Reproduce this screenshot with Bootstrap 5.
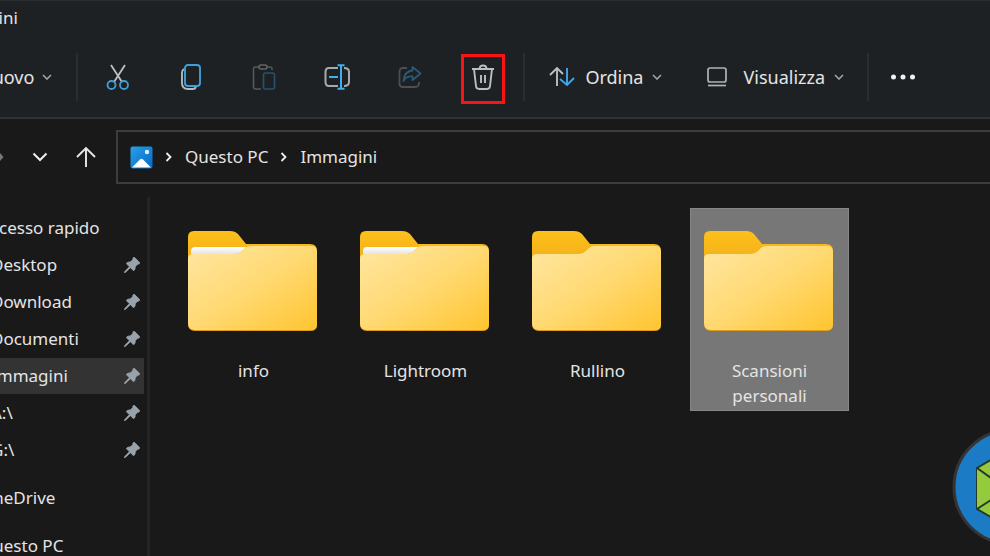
<!DOCTYPE html>
<html lang="it" data-bs-theme="dark">
<head>
<meta charset="utf-8">
<meta name="viewport" content="width=device-width, initial-scale=1">
<title>Immagini</title>
<link href="https://cdn.jsdelivr.net/npm/bootstrap@5.3.0/dist/css/bootstrap.min.css" rel="stylesheet">
<style>
  body { background: #191919; color: #e4e4e4; font: 17px/24px "Noto Sans", "Liberation Sans", sans-serif; }
  svg { display: block; flex: none; }
  .explorer { min-height: 100vh; }
  .top-area { background: #1e2124; border-top: 1px solid #2b2e30; border-bottom: 2px solid #303233; }
  .title-row { height: 36px; margin-left: -59px; padding-bottom: 2px; }
  .tools { height: 80px; margin-left: -21px; }
  .tools .btn, .address .btn { color: inherit; font-size: 18px; line-height: 24px; border: 0; padding: 0; border-radius: 0; }
  .tool-icon { width: 44px; height: 50px; display: flex; align-items: center; justify-content: center; }
  .tools .marked { border: 3px solid #fb1414; margin-top: 4px; height: 50px; }
  .icon-set { gap: 29px; margin-left: 18px; margin-right: 18px; align-items: center; }
  .icon-set .tool-icon { flex: none; }
  .view-btn { margin-left: 44px; }
  .tools .order-icon { margin-left: 24px; }
  .tools .end-gap { margin-left: 22px; }
  .rule { width: 2px; height: 48px; background: #2b2e30; }
  .address { padding-top: 11px; height: 65px; }
  .path-box { height: 54px; border: 2px solid #3d3d3d; border-right: 0; padding-left: 12px; }
  .path-box a, .side a { color: inherit; text-decoration: none; }
  .path-box .sep { margin: 0 13px 0 12px; }
  .side { width: 150px; border-right: 3px solid #242424; margin-top: 13px; padding: 13px 3px 0 0; }
  .side a { height: 36px; margin-bottom: 1px; padding-left: 11px; white-space: nowrap; }
  .side ul { margin-left: -20px; }
  .side .group-link { padding-left: 0; }
  .side .spaced { margin-top: 12px; }
  .side .picked { background: #333; }
  .side-scroll { overflow: hidden; flex: 1 1 0; }
  .side svg { margin-left: auto; margin-right: 4px; }
  .files { gap: 13px; padding: 24px; }
  .tile { width: 159px; border: 0; background: none; color: inherit; padding: 22px 14px 3px; line-height: 25px; }
  .tile svg { margin-bottom: 26px; }
  .tile.chosen { background: #777; outline: 1px solid #868686; outline-offset: -1px; }
  .badge-logo { position: absolute; right: -80px; bottom: 10px; }
</style>
<script src="https://cdn.jsdelivr.net/npm/bootstrap@5.3.0/dist/js/bootstrap.bundle.min.js"></script>
</head>
<body class="overflow-hidden">
<svg width="0" height="0" class="position-absolute" aria-hidden="true">
  <defs>
    <linearGradient id="front" x1="0" y1="0" x2="1" y2="1"><stop offset="0" stop-color="#ffe7a2"/><stop offset=".5" stop-color="#ffd972"/><stop offset="1" stop-color="#ffc52f"/></linearGradient>
    <linearGradient id="back" x1="0" y1="0" x2="0" y2="1"><stop offset="0" stop-color="#fdc01b"/><stop offset=".3" stop-color="#f3b01a"/><stop offset="1" stop-color="#dd9a1c"/></linearGradient>
    <linearGradient id="paper" x1="0" y1="0" x2="0" y2="1"><stop offset="0" stop-color="#fff"/><stop offset="1" stop-color="#d8dce2"/></linearGradient>
    <linearGradient id="sky" x1="0" y1="0" x2="1" y2="1"><stop offset="0" stop-color="#2aa0e6"/><stop offset="1" stop-color="#0568c4"/></linearGradient>
    <symbol id="folder" viewBox="0 0 129 102">
      <path d="M0 7Q0 1 6 1H42Q47 1 50 4L58 14H122Q129 14 129 21V95Q129 101 122 101H7Q0 101 0 94Z" fill="url(#back)"/>
      <path d="M0 29Q0 24 5 24H47Q51 24 54 21L57 18Q59 16 63 16H123Q129 16 129 22V94Q129 100 123 100H7Q0 100 0 93Z" fill="url(#front)"/>
    </symbol>
    <symbol id="folder-full" viewBox="0 0 129 102">
      <use href="#folder"/>
      <path d="M3 26V21Q3 17 7 17H58L54 21Q51 24 47 24H5Q3 24 3 26Z" fill="url(#paper)"/>
    </symbol>
    <symbol id="pin" viewBox="0 0 16 16"><path d="M9.4.5Q10 0 10.700 .6L15.400 5.300Q16 6 15.300 6.700Q14.500 7.300 13.600 7.200L11.200 9.800Q11.500 12 10.200 13.300Q9.600 13.800 9 13.200L6.400 10.700L1.600 15.200L.3 15.700L.8 14.400L5.400 9.700L2.800 7.100Q2.200 6.500 2.800 5.900Q4.200 4.700 6.300 5L8.800 2.500Q8.700 1.200 9.400 .5Z" fill="#98a2ab" stroke="#98a2ab" stroke-width=".8"/></symbol>
    <symbol id="down" viewBox="0 0 10 6"><path d="M1 1l4 4 4-4" fill="none" stroke="#a5a7a8" stroke-width="1.500"/></symbol>
    <symbol id="next" viewBox="0 0 7 10"><path d="M1.500 1l4 4-4 4" fill="none" stroke="#eee" stroke-width="1.800"/></symbol>
  </defs>
</svg>
<div class="explorer d-flex flex-column position-relative overflow-hidden">
  <header class="top-area">
    <div class="title-row d-flex align-items-center">Immagini</div>
    <div class="tools d-flex align-items-center" role="toolbar" aria-label="Comandi">
      <button class="btn d-flex align-items-center" type="button">Nuovo<svg class="ms-2" width="10" height="6"><use href="#down"/></svg></button>
      <div class="rule ms-4"></div>
      <div class="icon-set d-flex">
        <button class="btn tool-icon" type="button" aria-label="Taglia"><svg width="24" height="28" viewBox="0 0 24 28" fill="none" stroke-width="1.800"><path d="M5 2L16 19M19 2L8 19" stroke="#bfc2c4"/><circle cx="5.500" cy="22" r="4" stroke="#3f9fd6"/><circle cx="18" cy="22" r="4" stroke="#3f9fd6"/></svg></button>
        <button class="btn tool-icon" type="button" aria-label="Copia"><svg width="22" height="28" viewBox="0 0 22 28" fill="none" stroke-width="1.900"><path d="M4 6Q2 7 2 10V20Q2 26 8 26H13Q15 26 16 24" stroke="#b5b8ba"/><rect x="5" y="2" width="15" height="21" rx="3" stroke="#3f9fd6"/></svg></button>
        <button class="btn tool-icon" type="button" aria-label="Incolla"><svg width="24" height="28" viewBox="0 0 24 28" fill="none" stroke-width="1.600"><path d="M7 4H3Q1.500 4 1.500 6V24Q1.500 26 4 26H9M15 4H18Q20 4 20 6V7" stroke="#54585a"/><rect x="7" y="2" width="8" height="4" rx="2" stroke="#606466"/><rect x="11.500" y="10" width="11" height="16" rx="2" stroke="#285269"/></svg></button>
        <button class="btn tool-icon" type="button" aria-label="Rinomina"><svg width="26" height="26" viewBox="0 0 26 26" fill="none" stroke-width="2"><path d="M14 4H5Q1.500 4 1.500 8V18Q1.500 22 5 22H14M20 4Q25 4 25 8V18Q25 22 20 22" stroke="#a7aaac"/><path d="M17 1.500V24.500M13.500 1.200H20.500M13.500 24.800H20.500M5 13H14" stroke="#3fb0ee"/></svg></button>
        <button class="btn tool-icon" type="button" aria-label="Condividi"><svg width="24" height="24" viewBox="0 0 24 24" fill="none" stroke-width="1.800"><path d="M9 3H5Q1.500 3 1.500 7V19Q1.500 22 5 22H17Q21 22 21 18V17" stroke="#4b5052"/><path d="M14.500 2L22.500 8.500L14.500 15V11.500Q8 11 5.500 16Q6 6.500 14.500 5.500Z" stroke="#2b5b74" stroke-linejoin="round"/></svg></button>
        <button class="btn tool-icon marked" type="button" aria-label="Elimina"><svg class="mb-1" width="24" height="28" viewBox="0 0 24 28" fill="none" stroke="#bcbfc1" stroke-width="1.900"><path d="M1 6H23M8.500 6Q8.500 2.500 12 2.500Q15.500 2.500 15.500 6M3 6L5 23Q5.300 26 8 26H16Q18.700 26 19 23L21 6M10 12V20M14 12V20"/></svg></button>
      </div>
      <div class="rule"></div>
      <button class="btn order-icon d-flex align-items-center" type="button"><svg class="me-2" width="28" height="22" viewBox="0 0 28 22" fill="none" stroke-width="1.900"><path d="M8 20V3M1 9L8 2L14 8" stroke="#bcbfc1"/><path d="M18 2V19M11 13L18 19L25 12" stroke="#3fa9e8"/></svg>Ordina<svg class="ms-2" width="12" height="6"><use href="#down"/></svg></button>
      <button class="btn view-btn d-flex align-items-center" type="button"><svg class="me-3" width="20" height="22" viewBox="0 0 20 22" fill="none" stroke="#b0b3b5" stroke-width="1.700"><rect x="1" y="2" width="18" height="14" rx="2"/><path d="M1 19.500H19"/></svg>Visualizza<svg class="ms-2" width="12" height="6"><use href="#down"/></svg></button>
      <div class="rule end-gap"></div>
      <button class="btn end-gap" type="button" aria-label="Altro"><svg width="26" height="6" viewBox="0 0 26 6" fill="#f2f2f2"><circle cx="2.500" cy="3" r="2.500"/><circle cx="12" cy="3" r="2.500"/><circle cx="21.500" cy="3" r="2.500"/></svg></button>
    </div>
  </header>
  <div class="address d-flex align-items-center">
    <button class="btn" type="button" aria-label="Avanti"><svg width="4" height="8" viewBox="0 0 4 8"><path d="M0 0L3.500 4L0 8Z" fill="#777"/></svg></button>
    <button class="btn ms-4 ps-1" type="button" aria-label="Recenti"><svg width="16" height="10" viewBox="0 0 16 10" fill="none" stroke="#eee" stroke-width="2"><path d="M1.500 1.500L8 8L14.500 1.500"/></svg></button>
    <button class="btn ms-4 me-3" type="button" aria-label="Su"><svg class="ms-1 me-1" width="20" height="22" viewBox="0 0 20 22" fill="none" stroke="#e8e8e8" stroke-width="1.900"><path d="M10 21V2M1 11L10 2L19 11"/></svg></button>
    <nav class="path-box d-flex align-items-center flex-grow-1" aria-label="Percorso">
      <svg width="23" height="23" viewBox="0 0 23 23"><rect x=".5" y=".5" width="22" height="22" rx="2" fill="url(#sky)"/><circle cx="17" cy="6" r="2.200" fill="#d5efff"/><path d="M2 21.500L10 13.500Q11.500 12 13 13.500L21 21.500Z" fill="#fff"/></svg>
      <svg class="sep" width="7" height="10"><use href="#next"/></svg>
      <a href="#">Questo PC</a>
      <svg class="sep" width="7" height="10"><use href="#next"/></svg>
      <a href="#">Immagini</a>
    </nav>
  </div>
  <div class="d-flex flex-grow-1">
    <aside class="side d-flex flex-column flex-shrink-0">
      <div class="side-scroll">
      <ul class="list-unstyled mb-0">
        <li><a class="group-link d-flex align-items-center" href="#">Accesso rapido</a></li>
        <li><a class="d-flex align-items-center" href="#">Desktop<svg width="16" height="16"><use href="#pin"/></svg></a></li>
        <li><a class="d-flex align-items-center" href="#">Download<svg width="16" height="16"><use href="#pin"/></svg></a></li>
        <li><a class="d-flex align-items-center" href="#">Documenti<svg width="16" height="16"><use href="#pin"/></svg></a></li>
        <li><a class="picked d-flex align-items-center" href="#">Immagini<svg width="16" height="16"><use href="#pin"/></svg></a></li>
        <li><a class="d-flex align-items-center" href="#">A:\<svg width="16" height="16"><use href="#pin"/></svg></a></li>
        <li><a class="d-flex align-items-center" href="#">G:\<svg width="16" height="16"><use href="#pin"/></svg></a></li>
        <li class="spaced"><a class="group-link d-flex align-items-center" href="#">OneDrive</a></li>
        <li class="spaced"><a class="group-link d-flex align-items-center" href="#">Questo PC</a></li>
      </ul>
      </div>
    </aside>
    <main class="files d-flex flex-wrap align-items-start align-content-start flex-grow-1">
      <button class="tile" type="button"><svg width="129" height="102"><use href="#folder-full"/></svg>info</button>
      <button class="tile" type="button"><svg width="129" height="102"><use href="#folder-full"/></svg>Lightroom</button>
      <button class="tile" type="button"><svg width="129" height="102"><use href="#folder"/></svg>Rullino</button>
      <button class="tile chosen" type="button"><svg width="129" height="102"><use href="#folder"/></svg>Scansioni<br>personali</button>
    </main>
  </div>
  <svg class="badge-logo" width="118" height="118" viewBox="0 0 118 118" aria-hidden="true">
    <circle cx="59" cy="59" r="57" fill="#1b7bc4" stroke="#343434" stroke-width="3"/>
    <g fill="#93cb3c" stroke="#24382e" stroke-width="2" stroke-linejoin="round"><path d="M25 40L59 20L93 40V81L59 101L25 81Z"/><path d="M25 40L39 50V72L25 81M39 50L59 38L79 50V72L59 84L39 72M79 50L93 40M79 72L93 81"/></g>
  </svg>
</div>
</body>
</html>
